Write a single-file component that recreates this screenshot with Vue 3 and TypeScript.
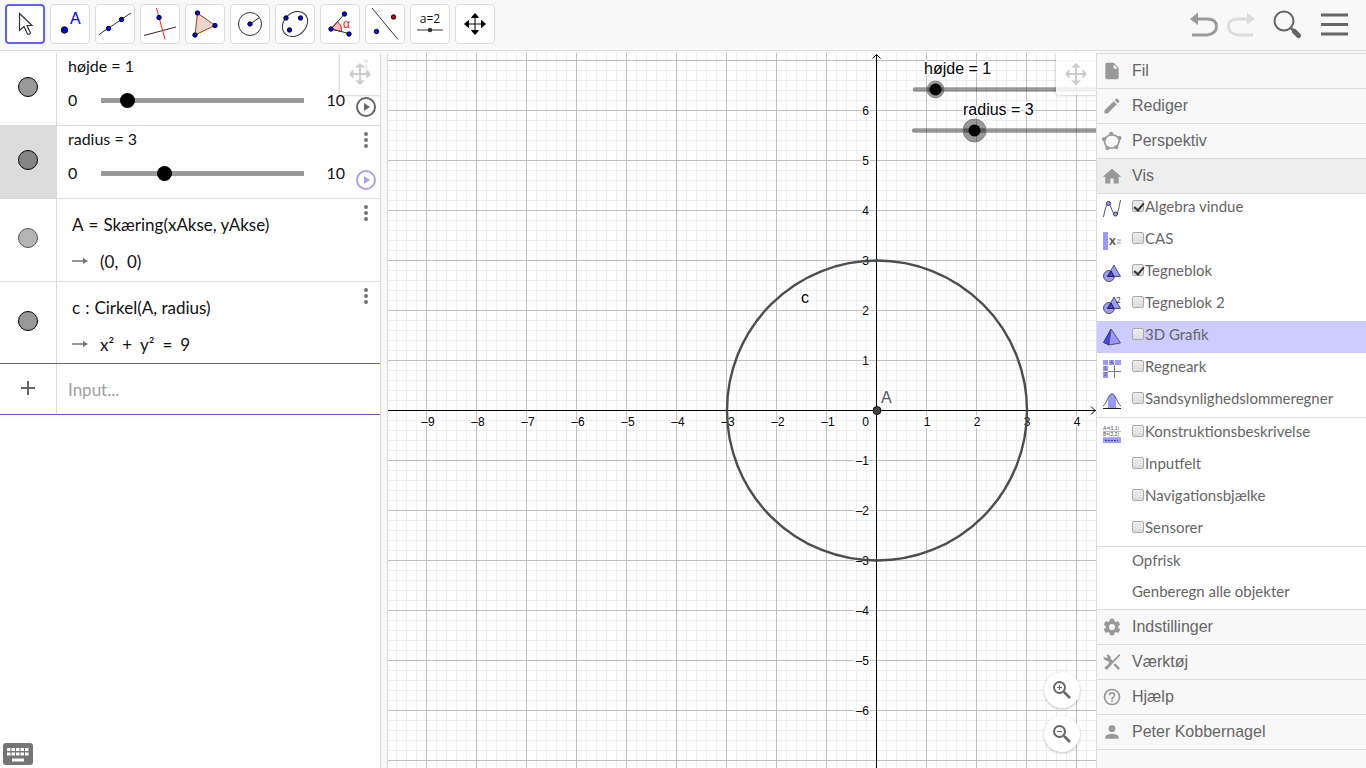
<script setup lang="ts">
import { ref } from 'vue'

interface Tool { id: string; label: string }
interface ViewItem { id: string; label: string; on: boolean; hot?: boolean; rule?: boolean }

const tools: Tool[] = [
  { id: 'move', label: 'Flyt' },
  { id: 'point', label: 'Punkt' },
  { id: 'line', label: 'Linje' },
  { id: 'perp', label: 'Vinkelret linje' },
  { id: 'poly', label: 'Polygon' },
  { id: 'circle', label: 'Cirkel' },
  { id: 'ellipse', label: 'Ellipse' },
  { id: 'angle', label: 'Vinkel' },
  { id: 'mirror', label: 'Spejling' },
  { id: 'slider', label: 'Skyder' },
  { id: 'pan', label: 'Flyt tegneblok' },
]
const activeTool = ref('move')

const sliders = ref([
  { name: 'højde', value: 1, hot: false },
  { name: 'radius', value: 3, hot: true },
])

const views = ref<ViewItem[]>([
  { id: 'algebra', label: 'Algebra vindue', on: true },
  { id: 'cas', label: 'CAS', on: false },
  { id: 'graph', label: 'Tegneblok', on: true },
  { id: 'graph2', label: 'Tegneblok 2', on: false },
  { id: 'three', label: '3D Grafik', on: false, hot: true },
  { id: 'sheet', label: 'Regneark', on: false },
  { id: 'prob', label: 'Sandsynlighedslommeregner', on: false },
  { id: 'protocol', label: 'Konstruktionsbeskrivelse', on: false, rule: true },
  { id: 'input', label: 'Inputfelt', on: false },
  { id: 'nav', label: 'Navigationsbjælke', on: false },
  { id: 'sensor', label: 'Sensorer', on: false },
])

const upper = [
  { label: 'Fil', d: 'M6 2h8l6 6v12a2 2 0 0 1-2 2H6a2 2 0 0 1-2-2V4a2 2 0 0 1 2-2zm8 2v5h5z' },
  { label: 'Rediger', d: 'M3 17.2V21h3.8L17.8 9.9l-3.7-3.7zM20.7 7a1 1 0 0 0 0-1.4l-2.3-2.3a1 1 0 0 0-1.4 0l-1.800 1.800 3.700 3.700z' },
  { label: 'Perspektiv', d: '' },
  { label: 'Vis', d: 'M10 21v-6h4v6h6v-8h3L12 3 1 13h3v8z' },
]
const lower = [
  { label: 'Indstillinger', d: 'M19.4 13a8 8 0 0 0 0-2l2.1-1.7a.5.5 0 0 0 .1-.6l-2-3.5a.5.5 0 0 0-.6-.2l-2.5 1a7 7 0 0 0-1.7-1l-.4-2.600a.5.5 0 0 0-.5-.4h-4a.5.5 0 0 0-.5.4L9.100 5a8 8 0 0 0-1.700 1L4.900 5a.5.5 0 0 0-.6.2l-2 3.500a.5.5 0 0 0 .1.6L4.500 11a8 8 0 0 0 0 2l-2.100 1.700a.5.5 0 0 0-.1.6l2 3.500c.1.2.4.3.6.2l2.500-1a7 7 0 0 0 1.700 1l.4 2.600c0 .2.2.4.5.4h4c.3 0 .5-.2.5-.4l.4-2.600a8 8 0 0 0 1.700-1l2.500 1c.2.1.5 0 .6-.2l2-3.500a.5.5 0 0 0-.1-.6zM12 15.500a3.500 3.500 0 1 1 0-7 3.500 3.500 0 0 1 0 7z' },
  { label: 'Værktøj', d: 'M13.800 15.700l2.100-2.100 5.700 5.800-2.100 2.100zM22 4L5.500 21.500 3 19l6-6-2.500-2.500a4.300 4.300 0 0 1-4.500-5.500l2.500 2.500 2.500-2L5 3.200a4.300 4.300 0 0 1 5.500 5L13 10.500 20.500 2.500z' },
  { label: 'Hjælp', d: 'M11 18h2v-2h-2zM12 2a10 10 0 1 0 0 20 10 10 0 0 0 0-20zm0 18a8 8 0 1 1 0-16 8 8 0 0 1 0 16zm0-14a4 4 0 0 0-4 4h2a2 2 0 1 1 4 0c0 2-3 1.800-3 5h2c0-2.200 3-2.500 3-5a4 4 0 0 0-4-4z' },
  { label: 'Peter Kobbernagel', d: 'M12 12a4 4 0 1 0 0-8 4 4 0 0 0 0 8zm0 2c-2.700 0-8 1.300-8 4v2h16v-2c0-2.700-5.300-4-8-4z' },
]

const unit = 50
const ox = 488
const oy = 357
const gridX = Array.from({ length: 240 }, (_, i) => i - 48)
const gridY = Array.from({ length: 160 }, (_, i) => i - 35)
const xLabels = [-9, -8, -7, -6, -5, -4, -3, -2, -1, 1, 2, 3, 4]
const yLabels = [6, 5, 4, 3, 2, 1, -1, -2, -3, -4, -5, -6]
const num = (n: number): string => (n < 0 ? '–' + -n : String(n))
</script>

<template>
  <div class="app">
    <header class="bar">
      <nav class="tools" aria-label="Værktøjslinje">
        <button v-for="t in tools" :key="t.id" type="button" class="tool" :class="{ active: t.id === activeTool }" :aria-label="t.label" @click="activeTool = t.id">
          <svg width="32" height="32" viewBox="0 0 32 32" fill="none" stroke="#333">
            <path v-if="t.id === 'move'" d="M10.500 5.500v17l4.500-4 3.500 7.500q2 1 3-1l-3.500-7.500h5z" stroke="#333" fill="#fff" stroke-width="1.200" />
            <g v-else-if="t.id === 'point'">
              <circle cx="10.500" cy="22" r="3.200" fill="#00f" stroke="#000" />
              <text x="16" y="16" font-size="16" fill="#00f" stroke="none">A</text>
            </g>
            <g v-else-if="t.id === 'line'">
              <path d="M0 26.500L32 5" />
              <circle class="dot" cx="9.500" cy="20.500" r="2.200" /><circle class="dot" cx="22.500" cy="11.500" r="2.200" />
            </g>
            <g v-else-if="t.id === 'perp'">
              <path d="M0 27.500l32-8.500" stroke="#422" /><path d="M12.500 0L21 31.500" stroke="#f22" />
              <circle class="dot" cx="15" cy="9.500" r="2.200" />
            </g>
            <g v-else-if="t.id === 'poly'">
              <path d="M8.500 5L26 17.500 6 27z" fill="#ebd6cc" stroke="#a53c0a" />
              <circle class="dot" cx="8.500" cy="5" r="2.200" /><circle class="dot" cx="26" cy="17.500" r="2.200" /><circle class="dot" cx="6" cy="27" r="2.200" />
            </g>
            <g v-else-if="t.id === 'circle'">
              <circle cx="16" cy="16" r="11.500" /><path d="M16 16l9.500-6.500" />
              <circle class="dot" cx="16" cy="16" r="2.200" />
            </g>
            <g v-else-if="t.id === 'ellipse'">
              <ellipse cx="16" cy="16" rx="14" ry="11" transform="rotate(-45 16 16)" />
              <circle class="dot" cx="7" cy="10" r="2.200" /><circle class="dot" cx="21.500" cy="10" r="2.200" /><circle class="dot" cx="10.500" cy="22" r="2.200" />
            </g>
            <g v-else-if="t.id === 'angle'">
              <path d="M7 21l6.500-7.500q5 4 4 10z" fill="#fbb" stroke="#d22" />
              <path d="M25 25.500L7 21 20.500 6" />
              <text x="19" y="20" font-size="12" fill="#f22" stroke="none">α</text>
              <circle class="dot" cx="7" cy="21" r="2.200" /><circle class="dot" cx="20.500" cy="6" r="2.200" /><circle class="dot" cx="25" cy="26" r="2.200" />
            </g>
            <g v-else-if="t.id === 'mirror'">
              <path d="M3 0l26 31.500" />
              <circle class="dot" cx="7.500" cy="23.500" r="2.200" /><circle cx="24.500" cy="9" r="2.200" fill="#d00" stroke="#000" />
            </g>
            <g v-else-if="t.id === 'slider'">
              <text class="caption" x="16" y="15" text-anchor="middle">a=2</text>
              <path d="M3 22h26" /><circle cx="16" cy="22" r="2.200" fill="#333" stroke="none" />
            </g>
            <path v-else d="M16 9v14M9 16h14M16 5.500l3.500 4h-7zM16 26.500l-3.500-4h7zM5.500 16l4-3.500v7zM26.500 16l-4 3.500v-7z" fill="#000" stroke="#000" />
          </svg>
        </button>
      </nav>
      <div class="actions">
        <button type="button" class="plain" aria-label="Fortryd">
          <svg width="28" height="28" viewBox="0 0 28 28"><path d="M5 9h12q9.500 0 9.500 7.500T17 25H2" fill="none" stroke="#999" stroke-width="2.800" /><path d="M0 9L8 2.500v12.500z" fill="#999" /></svg>
        </button>
        <button type="button" class="plain" aria-label="Annuller fortryd" disabled>
          <svg width="28" height="28" viewBox="0 0 28 28"><path d="M23 9H11Q1.500 9 1.500 16.500T11 25h15" fill="none" stroke="#ddd" stroke-width="2.800" /><path d="M28 9L20 2.500v12.500z" fill="#ddd" /></svg>
        </button>
        <button type="button" class="plain search" aria-label="Søg">
          <svg width="30" height="30" viewBox="0 0 30 30" fill="none" stroke="#666"><circle cx="11" cy="12" r="9.500" stroke-width="2" /><path d="M17.500 18.500l4 4" stroke-width="2.500" /><path d="M21.500 22.500l4 4" stroke-width="5" stroke-linecap="round" /></svg>
        </button>
        <button type="button" class="plain" aria-label="Menu">
          <svg width="28" height="28" viewBox="0 0 28 28"><path d="M0 5h27M0 14.500h27M0 24h27" stroke="#666" stroke-width="3" /></svg>
        </button>
      </div>
    </header>

    <main class="main">
      <section class="algebra" aria-label="Algebra">
        <div v-for="s in sliders" :key="s.name" class="row">
          <div class="marble-cell" :class="{ hot: s.hot }"><button type="button" class="marble" :aria-label="'Vis ' + s.name"></button></div>
          <div class="slider-body">
            <label class="title" :for="'range-' + s.name">{{ s.name }} = {{ s.value }}</label>
            <div class="range-line">
              <span class="min">0</span>
              <input :id="'range-' + s.name" v-model.number="s.value" class="range" type="range" min="0" max="10" step="0.1" />
              <span class="max">10</span>
            </div>
          </div>
          <div class="side">
            <button type="button" class="plain" aria-label="Mere">
              <svg width="6" height="18" viewBox="0 0 6 18" fill="#757575"><circle cx="3" cy="3" r="2" /><circle cx="3" cy="9" r="2" /><circle cx="3" cy="15" r="2" /></svg>
            </button>
            <button type="button" class="plain play" :class="{ hot: s.hot }" aria-label="Afspil">
              <svg width="20" height="20" viewBox="0 0 20 20"><circle cx="10" cy="10" r="9" fill="none" stroke="currentColor" stroke-width="2" /><path d="M8 6v8l6-4z" fill="currentColor" /></svg>
            </button>
          </div>
        </div>

        <div class="row">
          <div class="marble-cell"><button type="button" class="marble pale" aria-label="Vis A"></button></div>
          <div class="formula">
            <div class="math"><span>A</span><span class="rel">=</span><span>Skæring(xAkse, yAkse)</span></div>
            <div class="math out">
              <svg class="arrow" width="16" height="8" viewBox="0 0 16 8"><path d="M0 4h13" stroke="#757575" stroke-width="1.500" /><path d="M11 1l5 3-5 3z" fill="#757575" /></svg>
              <span>(0,&nbsp; 0)</span>
            </div>
          </div>
          <div class="side">
            <button type="button" class="plain" aria-label="Mere">
              <svg width="6" height="18" viewBox="0 0 6 18" fill="#757575"><circle cx="3" cy="3" r="2" /><circle cx="3" cy="9" r="2" /><circle cx="3" cy="15" r="2" /></svg>
            </button>
          </div>
        </div>

        <div class="row last">
          <div class="marble-cell"><button type="button" class="marble" aria-label="Vis c"></button></div>
          <div class="formula">
            <div class="math"><span>c</span><span class="rel">:</span><span>Cirkel(A, radius)</span></div>
            <div class="math out">
              <svg class="arrow" width="16" height="8" viewBox="0 0 16 8"><path d="M0 4h13" stroke="#757575" stroke-width="1.500" /><path d="M11 1l5 3-5 3z" fill="#757575" /></svg>
              <span>x²</span><span class="rel wide">+</span><span>y²</span><span class="rel wide">=</span><span>9</span>
            </div>
          </div>
          <div class="side">
            <button type="button" class="plain" aria-label="Mere">
              <svg width="6" height="18" viewBox="0 0 6 18" fill="#757575"><circle cx="3" cy="3" r="2" /><circle cx="3" cy="9" r="2" /><circle cx="3" cy="15" r="2" /></svg>
            </button>
          </div>
        </div>

        <div class="row entry">
          <div class="marble-cell add">
            <button type="button" class="plain" aria-label="Tilføj">
              <svg width="14" height="14" viewBox="0 0 14 14"><path d="M7 0v14M0 7h14" stroke="#666" stroke-width="2" /></svg>
            </button>
          </div>
          <input class="entry-input" type="text" placeholder="Input..." aria-label="Input" />
        </div>

        <button type="button" class="drag" aria-label="Flyt vindue">
          <svg width="24" height="24" viewBox="0 0 24 24" fill="#ccc"><path d="M11 5h2v6h6v2h-6v6h-2v-6H5v-2h6zM12 1l5 4.500H7zM12 23l-5-4.500h10zM1 12l4.500-5v10zM23 12l-4.500 5V7z" /></svg>
        </button>
        <button type="button" class="plain keyboard" aria-label="Tastatur">
          <svg width="30" height="22" viewBox="0 0 30 22"><rect width="30" height="22" rx="3" fill="#757575" /><path d="M4 6.500h22M4 11h22" stroke="#fff" stroke-width="3" stroke-dasharray="3.500 1" /><path d="M9 17h12" stroke="#fff" stroke-width="3" /></svg>
        </button>
      </section>

      <div class="gutter"></div>

      <section class="canvas" aria-label="Tegneblok">
        <svg class="plot" width="100%" height="100%">
          <g shape-rendering="crispEdges">
            <template v-for="i in gridX" :key="'a' + i"><line v-if="i % 5" :x1="ox + i * 10 + 0.5" :x2="ox + i * 10 + 0.5" y1="0" y2="100%" stroke="#eee" /></template>
            <template v-for="i in gridY" :key="'b' + i"><line v-if="i % 5" x1="0" x2="100%" :y1="oy + i * 10 + 0.5" :y2="oy + i * 10 + 0.5" stroke="#eee" /></template>
            <template v-for="i in gridX" :key="'c' + i"><line v-if="i % 5 === 0" :x1="ox + i * 10 + 0.5" :x2="ox + i * 10 + 0.5" y1="0" y2="100%" stroke="#c0c0c0" /></template>
            <template v-for="i in gridY" :key="'d' + i"><line v-if="i % 5 === 0" x1="0" x2="100%" :y1="oy + i * 10 + 0.5" :y2="oy + i * 10 + 0.5" stroke="#c0c0c0" /></template>
            <line :x1="ox + 0.5" :x2="ox + 0.5" y1="2" y2="100%" stroke="#000" />
            <line x1="0" x2="100%" :y1="oy + 0.5" :y2="oy + 0.5" stroke="#000" />
          </g>
          <path d="M484.500 5.500l4-4 4 4" fill="none" stroke="#000" />
          <svg x="100%" y="0" overflow="visible"><path d="M-5 353.500l4 4-4 4" fill="none" stroke="#000" /></svg>
          <g class="ticks">
            <text v-for="n in xLabels" :key="'x' + n" :x="ox + n * unit + (n < 0 ? 2 : 1)" :y="oy + 16" text-anchor="middle">{{ num(n) }}</text>
            <text v-for="n in yLabels" :key="'y' + n" :x="ox - 7" :y="oy - n * unit + 5" text-anchor="end">{{ num(n) }}</text>
            <text :x="ox - 7" :y="oy + 16" text-anchor="end">0</text>
          </g>
          <circle :cx="ox + 1" :cy="oy + 0.5" r="150" fill="none" stroke="#444" stroke-opacity=".95" stroke-width="2.400" />
          <circle :cx="ox + 1" :cy="oy + 0.5" r="4" fill="#444" stroke="#111" />
          <g class="names">
            <text x="493" y="350" fill="#555">A</text>
            <text x="413" y="250">c</text>
          </g>
          <g fill="#000">
            <path d="M527 36.500H2000M526 77.500H2000" stroke="#000" stroke-opacity=".4" stroke-width="4.500" stroke-linecap="round" />
            <circle cx="547.500" cy="36.500" r="8.500" fill-opacity=".4" stroke="#777" stroke-width=".8" /><circle cx="547.500" cy="36.500" r="6" />
            <circle cx="586.500" cy="77.500" r="11.500" fill-opacity=".4" stroke="#777" stroke-width=".8" /><circle cx="586.500" cy="77.500" r="6" />
          </g>
          <g class="names">
            <text x="536" y="21">højde = 1</text>
            <text x="575" y="62">radius = 3</text>
          </g>
        </svg>
        <button type="button" class="drag" aria-label="Flyt tegneblok">
          <svg width="24" height="24" viewBox="0 0 24 24" fill="#ccc"><path d="M11 5h2v6h6v2h-6v6h-2v-6H5v-2h6zM12 1l5 4.500H7zM12 23l-5-4.500h10zM1 12l4.500-5v10zM23 12l-4.500 5V7z" /></svg>
        </button>
        <div class="zoomers">
          <button type="button" class="round" aria-label="Zoom ind">
            <svg width="24" height="24" viewBox="0 0 24 24" fill="none" stroke="#666"><circle cx="9.500" cy="9.500" r="5.500" stroke-width="2" /><path d="M14 14l6 6" stroke-width="2.500" /><path d="M7 9.500h5M9.500 7v5" /></svg>
          </button>
          <button type="button" class="round" aria-label="Zoom ud">
            <svg width="24" height="24" viewBox="0 0 24 24" fill="none" stroke="#666"><circle cx="9.500" cy="9.500" r="5.500" stroke-width="2" /><path d="M14 14l6 6" stroke-width="2.500" /><path d="M7 9.500h5" /></svg>
          </button>
        </div>
      </section>

      <aside class="menu">
        <button v-for="m in upper" :key="m.label" type="button" class="head" :class="{ open: m.label === 'Vis' }">
          <svg width="20" height="20" viewBox="0 0 24 24" fill="#999">
            <path v-if="m.d" :d="m.d" />
            <g v-else><path d="M11 4Q17 5 21 8.500 21 15 17 19.500 12 21 6.500 20.500 3 16 2.500 10 6 6 11 4z" fill="none" stroke="#999" stroke-width="2" /><circle cx="11" cy="3.500" r="2.500" /><circle cx="21" cy="8.500" r="2.500" /><circle cx="17" cy="19.500" r="2.500" /><circle cx="6.500" cy="20.500" r="2.500" /><circle cx="2.500" cy="10" r="2.500" /></g>
          </svg>
          <span>{{ m.label }}</span>
        </button>
        <div class="sub">
          <div v-for="v in views" :key="v.id" class="item" :class="{ hot: v.hot, rule: v.rule }">
            <svg class="mini" width="20" height="20" viewBox="0 0 20 20" fill="none" stroke="#555">
              <g v-if="v.id === 'algebra'"><path d="M1.500 18Q4 4 6.500 4.500C9 5 10 15 13.500 15.500 16 15.500 17 8 18.500 1" /><circle cx="6.500" cy="4.500" r="2" fill="#99f" stroke="#336" /><circle cx="13.500" cy="15" r="2" fill="#99f" stroke="#336" /></g>
              <g v-else-if="v.id === 'cas'"><path d="M1 1h5v18H1z" fill="#99f" stroke="none" /><text x="7" y="14" class="cas">x</text><path d="M15 9h4M15 12h4" stroke="#999" /></g>
              <g v-else-if="v.id === 'graph' || v.id === 'graph2'"><circle cx="7" cy="13" r="5.500" fill="#99f" stroke="#556" /><path d="M12 2l6.500 11.500h-13z" fill="#99f" stroke="#557" /><path d="M9 8l3 5.500H5.500z" fill="#44c" stroke="#223" /><text v-if="v.id === 'graph2'" x="14" y="8" font-size="8" fill="#333" stroke="none">2</text></g>
              <g v-else-if="v.id === 'three'"><path d="M9 2L1.500 15.500 7 18z" fill="#44e" stroke="#336" /><path d="M9 2L7 18l11.500-2z" fill="#99f" stroke="#557" /></g>
              <g v-else-if="v.id === 'sheet'"><path d="M1 1h5v5H1zM7 1h5v5H7zM13 1h6v5h-6zM1 7h5v5H1zM1 13h5v6H1z" fill="#99f" stroke="none" /><path d="M6 12.500h13M12.500 6v13" stroke="#777" /><text x="8" y="5" class="tiny">A</text><text x="2" y="11" class="tiny">1</text><text x="2" y="17" class="tiny">2</text></g>
              <g v-else-if="v.id === 'prob'"><path d="M6 17V7q4-9 8 0v10z" fill="#99f" stroke="none" /><path d="M1 15C5 13 6 3 10 3s5 10 9 12" /><path d="M1 17.500h18" stroke="#222" /></g>
              <g v-else-if="v.id === 'protocol'"><path d="M1 14h18v5H1z" fill="#99f" stroke="none" /><text x="1" y="6" class="tiny">A=(1,1)</text><text x="1" y="12" class="tiny">B=(2,2)</text><path d="M1 7.500h18M1 13.500h18" stroke="#bbb" /><path d="M3 16.500h13" stroke="#448" stroke-dasharray="2 1" /></g>
            </svg>
            <input :id="'view-' + v.id" v-model="v.on" type="checkbox" class="check" />
            <label :for="'view-' + v.id">{{ v.label }}</label>
          </div>
          <button type="button" class="cmd rule">Opfrisk</button>
          <button type="button" class="cmd">Genberegn alle objekter</button>
        </div>
        <button v-for="m in lower" :key="m.label" type="button" class="head">
          <svg width="20" height="20" viewBox="0 0 24 24" fill="#999"><path fill-rule="evenodd" :d="m.d" /></svg>
          <span>{{ m.label }}</span>
        </button>
        <div class="menu-end"></div>
      </aside>
    </main>
  </div>
</template>

<style>
body { margin: 0; }
</style>

<style scoped>
* { box-sizing: border-box; }
.app { height: 100vh; display: flex; flex-direction: column; background: #f8f8f8; font-family: "Liberation Sans", Arial, sans-serif; overflow: hidden; }
button { font: inherit; cursor: pointer; }
svg { display: block; flex: none; }
.plain { border: 0; padding: 0; background: none; }

.bar { flex: none; display: flex; justify-content: space-between; padding: 4px 17px 6px 5px; border-bottom: 1px solid #dcdcdc; margin-bottom: 2px; }
.tools { display: flex; gap: 5px; }
.tool { width: 40px; height: 40px; padding: 0; display: grid; place-items: center; background: #fff; border: 1px solid #dcdcdc; border-radius: 4px; }
.tool.active { border: 2px solid #6161ff; }
.dot { fill: #00f; stroke: #000; }
.caption { font: 12px "Open Sans", sans-serif; fill: #111; stroke: none; }
.actions { display: flex; align-items: center; gap: 9px; }
.search { margin: 0 9px 0 9px; }

.main { flex: 1; min-height: 0; display: flex; }
.algebra { width: 381px; flex: none; position: relative; background: #fff; border-right: 1px solid #dcdcdc; font-family: Lato, sans-serif; color: #111; }
.row { display: flex; border-bottom: 1px solid #dcdcdc; }
.marble-cell { width: 57px; flex: none; display: flex; align-items: center; justify-content: center; padding-bottom: 4px; border-right: 1px solid #dcdcdc; }
.marble-cell.add { padding-bottom: 2px; }
.marble-cell.hot { background: #dcdcdc; }
.marble { width: 20px; height: 20px; padding: 0; border: 1px solid #000; border-radius: 50%; background: #999; }
.hot .marble { background: #848484; }
.marble.pale { background: #b4b4b4; border-color: #555; }
.slider-body { flex: 1; padding: 1px 0 13px 11px; display: flex; flex-direction: column; gap: 10px; font-size: 16px; line-height: 24px; }
.title { display: block; }
.range-line { display: flex; align-items: center; height: 24px; }
.min { width: 33px; }
.max { width: 41px; text-align: right; }
.range { flex: 1; min-width: 0; height: 15px; margin: 0; appearance: none; background: linear-gradient(#999, #999) center / 100% 5px no-repeat; }
.range::-webkit-slider-thumb { appearance: none; width: 15px; height: 15px; border-radius: 50%; background: #000; }
.side { width: 35px; flex: none; padding: 5px 0 0 6px; display: flex; flex-direction: column; align-items: center; gap: 21px; }
.play { color: #666; }
.play.hot { color: #aca0e8; }
.formula { flex: 1; padding: 13px 0 8px 15px; font-size: 17px; }
.last .formula { padding-bottom: 7px; }
.math { display: flex; align-items: center; height: 24px; white-space: pre; }
.math.out { margin-top: 13px; }
.rel { margin: 0 5px; }
.rel.wide { margin: 0 8px; }
.arrow { margin-right: 12px; }
.row.last { border-bottom-color: #6557d2; }
.row.entry { height: 51px; border-bottom-color: #6557d2; }
.entry-input { flex: 1; min-width: 0; border: 0; outline: 0; padding: 0 11px; font: 17px Lato, sans-serif; background: none; }
.entry-input::placeholder { color: #a0a0a0; opacity: 1; }
.drag { position: absolute; top: 0; right: 0; width: 40px; height: 42px; padding: 0; display: grid; place-items: center; border: 0; background: rgba(255, 255, 255, .85); box-shadow: 0 0 3px rgba(0, 0, 0, .35); border-radius: 0 0 0 3px; clip-path: inset(0 0 -4px -4px); }
.keyboard { position: absolute; left: 3px; bottom: 3px; }
.gutter { width: 7px; flex: none; border-right: 1px solid #dcdcdc; background: #f8f8f8; }

.canvas { flex: 1; min-width: 0; position: relative; overflow: hidden; background: #fff; }
.plot { position: absolute; inset: 0; }
.ticks text, .names text { paint-order: stroke; stroke: #fff; stroke-width: 3px; stroke-linejoin: round; }
.ticks { font-size: 12px; }
.names { font-size: 16px; }
.zoomers { position: absolute; right: 16px; bottom: 16px; display: flex; flex-direction: column; gap: 8px; }
.round { width: 36px; height: 36px; padding: 0; display: grid; place-items: center; border: 0; border-radius: 50%; background: #fff; box-shadow: 0 1px 3px rgba(0, 0, 0, .25); }

.menu { width: 270px; flex: none; border-left: 1px solid #dcdcdc; background: #f8f8f8; color: #666; overflow: hidden; }
.head { width: 100%; height: 35px; display: flex; align-items: center; gap: 10px; padding: 0 5px; border: 0; border-top: 1px solid #dcdcdc; background: none; color: inherit; font-size: 16px; text-align: left; }
.head.open { background: #eee; }
.sub { background: #fff; box-shadow: inset 0 1px #dcdcdc; font-family: Lato, sans-serif; font-size: 15px; line-height: 20px; }
.item { display: flex; align-items: flex-start; height: 32px; padding: 3px 0 0 5px; }
.item.rule { height: 33px; }
.rule { border-top: 1px solid #dcdcdc; }
.item.hot { background: #ccf; }
.mini { margin: 3px 10px 0 0; }
.cas { font-size: 13px; font-weight: 700; fill: #555; stroke: none; }
.tiny { font-size: 5px; fill: #446; stroke: none; }
.check { appearance: none; width: 12px; height: 12px; margin: 4px 1px 0 0; border: 1px solid #aaa; border-radius: 2px; background: linear-gradient(#eee, #dcdcdc); position: relative; }
.check:checked::after { content: ""; position: absolute; left: 3px; top: 0; width: 4px; height: 8px; border: solid #333; border-width: 0 2px 2px 0; transform: rotate(40deg); }
.cmd { display: block; width: 100%; height: 31px; padding: 3px 35px 8px; border: 0; background: none; color: inherit; text-align: left; line-height: 20px; }
.cmd.rule { height: 32px; border-top: 1px solid #dcdcdc; }
.menu-end { border-top: 1px solid #dcdcdc; }
</style>
